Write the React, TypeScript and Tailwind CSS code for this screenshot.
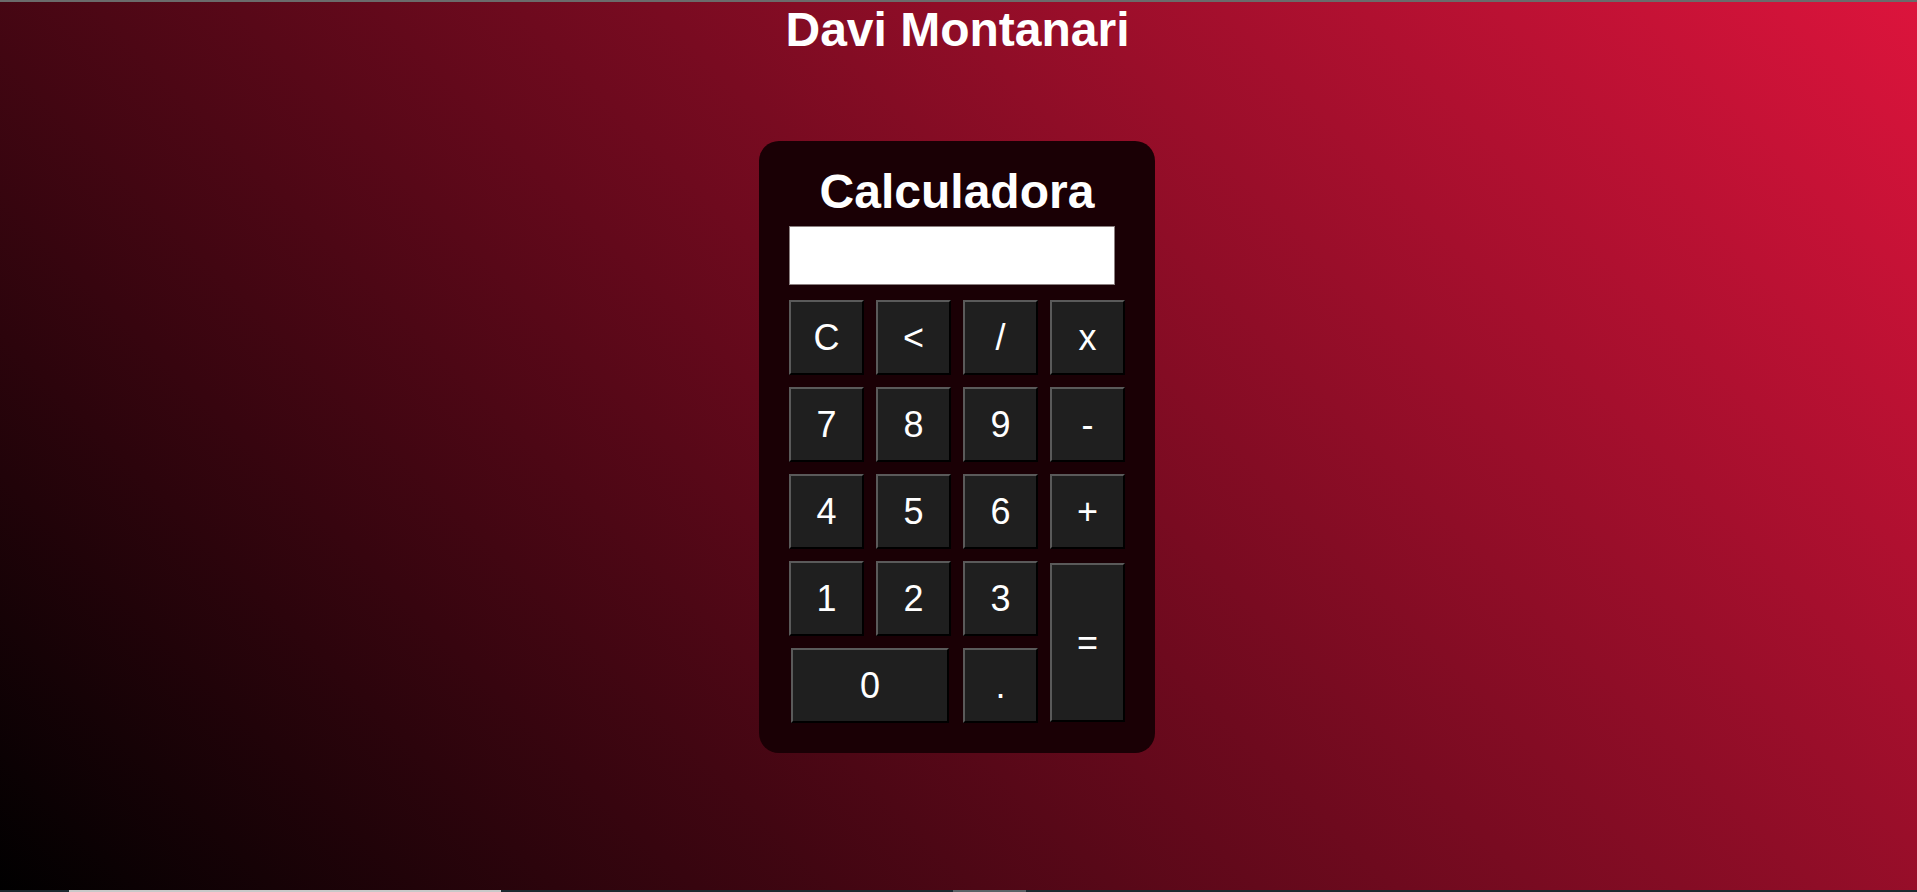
import React from "react";

const keys: { label: string; span?: string }[] = [
  { label: "C" },
  { label: "<" },
  { label: "/" },
  { label: "x" },
  { label: "7" },
  { label: "8" },
  { label: "9" },
  { label: "-" },
  { label: "4" },
  { label: "5" },
  { label: "6" },
  { label: "+" },
  { label: "1" },
  { label: "2" },
  { label: "3" },
  { label: "=", span: "row-span-2 mt-[2px] mb-[1px]" },
  { label: "0", span: "col-span-2 mx-[2px]" },
  { label: "." },
];

const App: React.FC = () => {
  return (
    <div
      className="h-screen w-full flex flex-col border-t-2 border-[#6b6b6b] bg-[linear-gradient(45deg,#000000,#dc143c)]"
      style={{ fontFamily: '"Liberation Sans", Arial, sans-serif' }}
    >
      {/* PAGE */}
      <div className="flex-1 flex flex-col items-center pr-[2px]">
        <h1 className="m-0 text-[48px] leading-[55px] font-bold text-white">
          Davi Montanari
        </h1>

        {/* CALCULATOR */}
        <div className="mt-[84px] mr-[1px] w-[396px] rounded-[20px] bg-[#1a0005] px-[30px] pt-[23px] pb-[30px]">
          <h2 className="text-center text-[48px] leading-[55px] font-bold text-white">
            Calculadora
          </h2>
          <div className="mt-[7px] h-[59px] w-[326px] bg-white border border-[#8a7f80]" />

          <div className="mt-[15px] grid grid-cols-[repeat(4,75px)] auto-rows-[75px] gap-3">
            {keys.map((k) => (
              <button
                key={k.label}
                className={`${k.span ?? ""} flex items-center justify-center bg-[#1f1f1f] text-white text-[36px] leading-none border-2 border-t-[#5a5a5a] border-l-[#5a5a5a] border-b-black border-r-black`}
              >
                {k.label}
              </button>
            ))}
          </div>
        </div>
      </div>

      {/* bottom strip */}
      <div className="h-[2px] w-full flex bg-[#1c2a30]">
        <div className="w-[69px]" />
        <div className="w-[432px] bg-[#c8c8c8]" />
        <div className="w-[452px]" />
        <div className="w-[73px] bg-[#5a6266]" />
      </div>
    </div>
  );
};

export default App;
